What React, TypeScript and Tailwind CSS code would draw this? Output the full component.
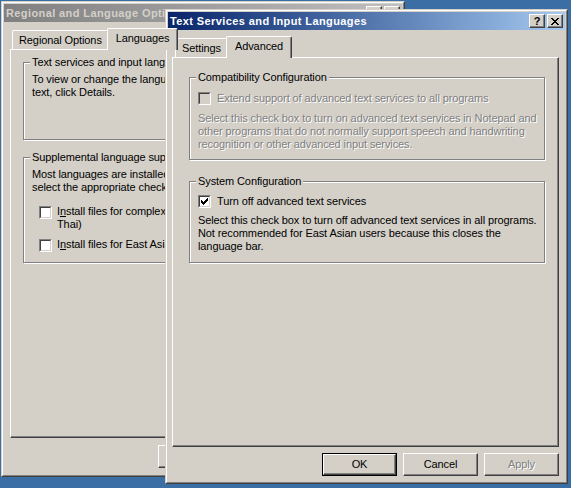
import type { ReactNode } from 'react'

// classic 3D window frame
function Frame({ className, children }: { className: string; children: ReactNode }) {
  return (
    <div className={`absolute border border-t-[#d4d0c8] border-l-[#d4d0c8] border-r-[#404040] border-b-[#404040] ${className}`}>
      <div className="flex h-full flex-col border border-t-white border-l-white border-r-[#808080] border-b-[#808080] bg-[#d4d0c8] p-px">
        {children}
      </div>
    </div>
  )
}

function CapBtn({ children }: { children: ReactNode }) {
  return (
    <div className="flex h-[14px] w-[16px] items-center justify-center border border-t-white border-l-white border-r-[#404040] border-b-[#404040] bg-[#d4d0c8] shadow-[inset_-1px_-1px_0_#808080]">
      {children}
    </div>
  )
}

function Tab({ label, selected }: { label: string; selected?: boolean }) {
  if (selected) {
    return (
      <div className="relative z-10 -mb-px -ml-[2px] flex h-[22px] items-start rounded-t-[2px] border-t border-l border-r border-t-white border-l-white border-r-[#404040] bg-[#d4d0c8] px-[8px] pt-[3px] shadow-[inset_-1px_0_0_#808080]">
        {label}
      </div>
    )
  }
  return (
    <div className="flex h-[19px] items-start rounded-t-[2px] border-t border-l border-r border-t-white border-l-white border-r-[#404040] px-[6px] pt-[3px] shadow-[inset_-1px_0_0_#808080]">
      {label}
    </div>
  )
}

function Check({ checked, disabled }: { checked?: boolean; disabled?: boolean }) {
  return (
    <span className="flex h-[13px] w-[13px] shrink-0 border border-t-[#808080] border-l-[#808080] border-r-white border-b-white">
      <span
        className={`flex h-[11px] w-[11px] items-center justify-center border border-t-[#404040] border-l-[#404040] border-r-[#d4d0c8] border-b-[#d4d0c8] ${
          disabled ? 'bg-[#d4d0c8]' : 'bg-white'
        }`}
      >
        {checked && (
          <svg width="7" height="7" viewBox="0 0 7 7" shapeRendering="crispEdges">
            <path d="M0 2h1v1h1v1h1V3h1V2h1V1h1V0h1v3H6v1H5v1H4v1H3v1H2V6H1V5H0z" fill="#000" />
          </svg>
        )}
      </span>
    </span>
  )
}

function Group({ label, className, children }: { label: string; className: string; children: ReactNode }) {
  return (
    <div className={`relative border border-[#808080] shadow-[inset_1px_1px_0_#fff,1px_1px_0_#fff] ${className}`}>
      <span className="absolute -top-[7px] left-[6px] bg-[#d4d0c8] px-[2px] whitespace-nowrap">{label}</span>
      {children}
    </div>
  )
}

function Btn({ label, isDefault, disabled }: { label: string; isDefault?: boolean; disabled?: boolean }) {
  const face = (
    <div
      className={`flex h-full w-full items-center justify-center border border-t-white border-l-white border-r-[#404040] border-b-[#404040] shadow-[inset_-1px_-1px_0_#808080] ${
        disabled ? 'text-[#808080] [text-shadow:1px_1px_0_#fff]' : ''
      }`}
    >
      {label}
    </div>
  )
  return <div className={`h-[23px] w-[75px] ${isDefault ? 'border border-black' : ''}`}>{face}</div>
}

const dim = 'text-[#808080] [text-shadow:1px_1px_0_#fff]'

export default function App() {
  return (
    <div className="relative h-[488px] w-[571px] overflow-hidden bg-[#3a6ea5] font-['Liberation_Sans',Arial,sans-serif] text-[11px] leading-[13px] tracking-[-0.1px] text-black">
      {/* background dialog */}
      <Frame className="left-[1px] top-[1px] h-[476px] w-[404px]">
        <div className="flex h-[18px] shrink-0 items-center justify-between bg-linear-to-r from-[#808080] to-[#c0c0c0] pl-[2px] pr-[2px]">
          <span className="font-bold tracking-[0.4px] text-[#d4d0c8]">Regional and Language Options</span>
          <div className="flex gap-[2px]">
            <CapBtn><span className="font-bold text-[#808080]">?</span></CapBtn>
            <CapBtn><span className="text-[#808080]">x</span></CapBtn>
          </div>
        </div>
        <div className="flex flex-1 flex-col pl-[6px] pr-[7px] pt-[7px]">
          <div className="flex h-[20px] items-end pl-[2px]">
            <Tab label="Regional Options" />
            <Tab label="Languages" selected />
            <Tab label="Advanced" />
          </div>
          <div className="flex-1 border border-t-white border-l-white border-r-[#404040] border-b-[#404040] pt-[12px] pl-[12px] shadow-[inset_-1px_-1px_0_#808080]">
            <Group label="Text services and input languages" className="h-[78px] w-[358px] pl-[8px] pt-[10px]">
              <div className="whitespace-nowrap">
                To view or change the languages and methods you can use to enter
                <br />
                text, click Details.
              </div>
            </Group>
            <Group label="Supplemental language support" className="mt-[17px] h-[106px] w-[358px] pt-[10px]">
              <div className="pl-[8px] whitespace-nowrap">
                Most languages are installed by default. To install additional languages,
                <br />
                select the appropriate check box below.
              </div>
              <div className="mt-[12px] flex items-start gap-[5px] pl-[15px]">
                <Check />
                <span className="-mt-px whitespace-nowrap">
                  I<u>n</u>stall files for complex script and right-to-left languages (including
                  <br />
                  Thai)
                </span>
              </div>
              <div className="mt-[8px] flex items-start gap-[5px] pl-[15px]">
                <Check />
                <span className="-mt-px whitespace-nowrap">
                  I<u>n</u>stall files for East Asian languages
                </span>
              </div>
            </Group>
          </div>
          <div className="mb-[6px] mt-[7px] flex justify-end gap-[6px]">
            <Btn label="OK" />
            <Btn label="Cancel" />
            <Btn label="Apply" />
          </div>
        </div>
      </Frame>

      {/* foreground dialog */}
      <Frame className="left-[165px] top-[9px] h-[475px] w-[403px]">
        <div className="flex h-[18px] shrink-0 items-center justify-between bg-linear-to-r from-[#0a246a] to-[#a6caf0] pl-[2px] pr-[2px]">
          <span className="font-bold tracking-[0.4px] text-white">Text Services and Input Languages</span>
          <div className="flex gap-[2px]">
            <CapBtn><span className="text-[11px] font-bold leading-none">?</span></CapBtn>
            <CapBtn>
              <svg width="8" height="7" viewBox="0 0 8 7" shapeRendering="crispEdges">
                <path d="M0 0h2v1h1v1h2V1h1V0h2v1H7v1H6v1H5v1h1v1h1v1h1v1H6V6H5V5H3v1H2v1H0V6h1V5h1V4h1V3H2V2H1V1H0z" fill="#000" />
              </svg>
            </CapBtn>
          </div>
        </div>
        <div className="flex flex-1 flex-col pl-[4px] pr-[6px] pt-[6px]">
          <div className="flex h-[21px] items-end pl-[3px]">
            <Tab label="Settings" />
            <Tab label="Advanced" selected />
          </div>
          <div className="flex-1 border border-t-white border-l-white border-r-[#404040] border-b-[#404040] pl-[16px] pt-[19px] shadow-[inset_-1px_-1px_0_#808080]">
            <Group label="Compatibility Configuration" className="w-[356px] pb-[8px] pl-[8px] pt-[14px]">
              <div className="flex items-center gap-[6px]">
                <Check disabled />
                <span className={`whitespace-nowrap ${dim}`}>Extend support of advanced text services to all programs</span>
              </div>
              <div className={`mt-[7px] whitespace-nowrap ${dim}`}>
                Select this check box to turn on advanced text services in Notepad and
                <br />
                other programs that do not normally support speech and handwriting
                <br />
                recognition or other advanced input services.
              </div>
            </Group>
            <Group label="System Configuration" className="mt-[21px] w-[356px] pb-[9px] pl-[8px] pt-[13px]">
              <div className="flex items-center gap-[6px]">
                <Check checked />
                <span className="whitespace-nowrap">Turn off advanced text services</span>
              </div>
              <div className="mt-[6px] whitespace-nowrap">
                Select this check box to turn off advanced text services in all programs.
                <br />
                Not recommended for East Asian users because this closes the
                <br />
                language bar.
              </div>
            </Group>
          </div>
          <div className="mb-[5px] mt-[6px] flex justify-end gap-[6px]">
            <Btn label="OK" isDefault />
            <Btn label="Cancel" />
            <Btn label="Apply" disabled />
          </div>
        </div>
      </Frame>
    </div>
  )
}
